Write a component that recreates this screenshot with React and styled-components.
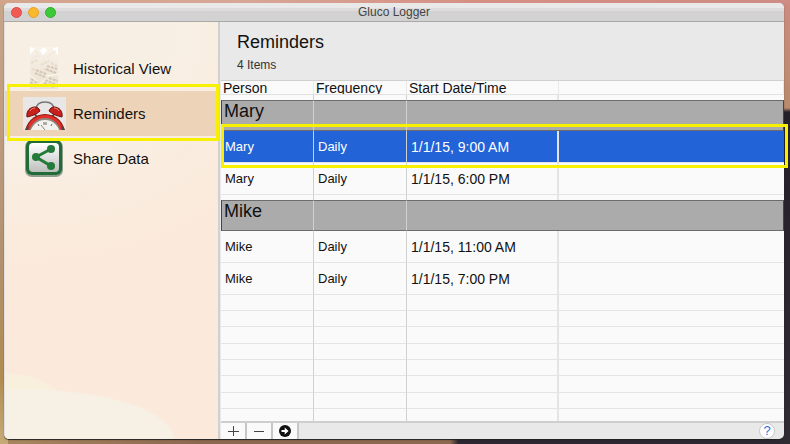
import React from "react";
import styled, { createGlobalStyle } from "styled-components";

const reminderGroups = [
  {
    person: "Mary",
    reminders: [
      { frequency: "Daily", start: "1/1/15, 9:00 AM", selected: true },
      { frequency: "Daily", start: "1/1/15, 6:00 PM" },
    ],
  },
  {
    person: "Mike",
    reminders: [
      { frequency: "Daily", start: "1/1/15, 11:00 AM" },
      { frequency: "Daily", start: "1/1/15, 7:00 PM" },
    ],
  },
];

const emptyRows = [1, 2, 3, 4, 5, 6, 7, 8];

function App() {
  return (
    <Desktop>
      <GlobalStyle />
      <Window>
        <TitleBar>
          <Lights>
            <Light $color="#f25a54" $edge="#dd4a44" aria-label="Close" />
            <Light $color="#f8b92c" $edge="#e0a42a" aria-label="Minimize" />
            <Light $color="#3cca38" $edge="#2fae2c" aria-label="Zoom" />
          </Lights>
          <WindowTitle>Gluco Logger</WindowTitle>
        </TitleBar>
        <Body>
          <Sidebar>
            <NavItem href="#history">
              <HistoryIcon />
              <NavText>Historical View</NavText>
            </NavItem>
            <NavItem href="#reminders" $active>
              <AlarmIcon />
              <NavText>Reminders</NavText>
              <NavHighlight />
            </NavItem>
            <NavItem href="#share">
              <ShareIcon />
              <NavText>Share Data</NavText>
            </NavItem>
          </Sidebar>
          <Content>
            <Header>
              <Title>Reminders</Title>
              <Count>4 Items</Count>
            </Header>
            <ReminderTable />
            <Footer>
              <FooterButton aria-label="Add">
                <svg width="12" height="12" viewBox="0 0 12 12">
                  <path d="M6.500 1v10M1 6.500h11" stroke="#444" />
                </svg>
              </FooterButton>
              <FooterButton aria-label="Remove">
                <svg width="12" height="12" viewBox="0 0 12 12">
                  <path d="M1 6.500h10" stroke="#444" />
                </svg>
              </FooterButton>
              <FooterButton aria-label="Open">
                <svg width="12" height="12" viewBox="0 0 12 12">
                  <circle cx="6" cy="6" r="6" fill="#111" />
                  <path
                    d="M2.500 4.900h3.200V2.600L9.600 6 5.700 9.400V7.100H2.500z"
                    fill="#fff"
                  />
                </svg>
              </FooterButton>
              <HelpButton aria-label="Help">?</HelpButton>
            </Footer>
          </Content>
        </Body>
      </Window>
    </Desktop>
  );
}

function ReminderTable() {
  return (
    <Table>
      <colgroup>
        <Col $width="93px" />
        <Col $width="93px" />
        <Col $width="152px" />
        <Col />
      </colgroup>
      <thead>
        <tr>
          <HeadCell>
            <HeadText>Person</HeadText>
          </HeadCell>
          <HeadCell>
            <HeadText>Frequency</HeadText>
          </HeadCell>
          <HeadCell>
            <HeadText>Start Date/Time</HeadText>
          </HeadCell>
          <HeadCell>
            <HeadText />
          </HeadCell>
        </tr>
      </thead>
      {reminderGroups.map((group) => (
        <tbody key={group.person}>
          <SpacerRow>
            <BaseCell />
            <BaseCell />
            <BaseCell />
            <BaseCell />
          </SpacerRow>
          <tr>
            <GroupCell as="th" scope="rowgroup">
              {group.person}
            </GroupCell>
            <GroupCell />
            <GroupCell />
            <GroupCell />
          </tr>
          {group.reminders.map((reminder) => (
            <Row key={reminder.start} $selected={reminder.selected}>
              <Cell>
                {group.person}
                {reminder.selected && <RowHighlight />}
              </Cell>
              <Cell>{reminder.frequency}</Cell>
              <DateCell>{reminder.start}</DateCell>
              <Cell />
            </Row>
          ))}
        </tbody>
      ))}
      <tbody>
        {emptyRows.map((row) => (
          <tr key={row}>
            <EmptyCell />
            <EmptyCell />
            <EmptyCell />
            <EmptyCell />
          </tr>
        ))}
      </tbody>
    </Table>
  );
}

function HistoryIcon() {
  return (
    <Icon width="43" height="43" viewBox="0 0 43 43">
      <defs>
        <linearGradient id="paper" x1="0" y1="0" x2="0" y2="1">
          <stop offset="0" stopColor="#f9f2e9" />
          <stop offset="1" stopColor="#ebe1d1" />
        </linearGradient>
      </defs>
      <path d="M7 0h28v42H7z" fill="url(#paper)" />
      <path d="M7 0l5 2-5 5zM17 3l5-3 2 4-4 4zM30 1l5-1v8l-4-3z" fill="#fff" />
      <path
        d="M12 3l5 7M24 10l9-6M8 12l8-4M20 13l10 3"
        stroke="#f3eadf"
        strokeWidth="2"
      />
      <path
        d="M8 16l7-3M18 18l8-4M28 16l6 3M9 22l8 3M21 22l10 4"
        stroke="#e8ddcd"
        strokeWidth="2"
        strokeDasharray="3 1"
      />
      <path
        d="M13 23l10 4M12 26l10 4M24 19l10 3M23 22l10 4M8 32l6 4M7 35l6 4M22 33l10 4M21 36l10 4M26 31l9 3"
        stroke="#d3c8b6"
        strokeWidth="2"
        strokeDasharray="3 1"
      />
      <path d="M7 28l7 6M15 38l8-6M24 29l11-2" stroke="#fff9f0" />
    </Icon>
  );
}

function AlarmIcon() {
  return (
    <Icon width="43" height="33" viewBox="0 0 43 33">
      <path d="M0 0h43v33H0z" fill="#e8e7e5" />
      <path
        d="M13 13C13 7 17 5 22 5s9 2 9 8"
        fill="none"
        stroke="#77777a"
        strokeWidth="1.500"
      />
      <path d="M14 20l-3-4M29 20l3-4" stroke="#555" strokeWidth="2" />
      <path
        d="M4 20c-1-6 3-10 8-10 2 0 4 1 5 4-3 3-8 5-13 6z"
        fill="#c9201c"
        stroke="#6e100e"
      />
      <path
        d="M39 20c1-6-3-10-8-10-2 0-4 1-5 4 3 3 8 5 13 6z"
        fill="#c9201c"
        stroke="#6e100e"
      />
      <path d="M7 14c1-2 3-3 5-3M36 14c-1-2-3-3-5-3" fill="none" stroke="#f78a7c" />
      <circle cx="22" cy="37" r="20" fill="#8d1512" />
      <circle cx="22" cy="37" r="19" fill="#df3129" />
      <circle cx="22" cy="37" r="16" fill="#8f8780" />
      <circle cx="22" cy="38" r="15" fill="#f4f2ee" />
      <path d="M21 25v3M23 25v3M15 27l1 2M29 27l-1 2" stroke="#666" />
      <path d="M22 33l-4-5" stroke="#888" />
      <path d="M3 31l3-2-1 4H2zM41 31l-3-2 1 4h3z" fill="#4c4745" />
    </Icon>
  );
}

function ShareIcon() {
  return (
    <Icon width="43" height="39" viewBox="0 0 43 39">
      <defs>
        <linearGradient id="plate" x1="0" y1="0" x2="0" y2="1">
          <stop offset="0" stopColor="#fff" />
          <stop offset="1" stopColor="#bdbfbd" />
        </linearGradient>
      </defs>
      <rect x="2" y="1" width="38" height="37" rx="7" fill="#8f9d8f" />
      <rect x="3" y="1" width="36" height="35" rx="6" fill="#216b36" />
      <rect x="6" y="4" width="30" height="29" rx="4" fill="url(#plate)" />
      <path
        d="M28 10L13 18l15 9"
        fill="none"
        stroke="#237a39"
        strokeWidth="3"
      />
      <circle cx="28" cy="10" r="4" fill="#237a39" />
      <circle cx="13" cy="18" r="4" fill="#237a39" />
      <circle cx="28" cy="27" r="4" fill="#237a39" />
    </Icon>
  );
}

const GlobalStyle = createGlobalStyle`
  * {
    box-sizing: border-box;
  }

  body {
    margin: 0;
    font-family: "Liberation Sans", Arial, sans-serif;
    color: #111;
  }
`;

const Desktop = styled.div`
  display: flex;
  min-height: 100vh;
  padding: 3px 6px 5px 4px;
  background:
    linear-gradient(to right, #d3a48c, #d8a797 30%, #d59084 60%, #cf8c84) top /
      100% 4px no-repeat,
    linear-gradient(#cd8a80, #b98a6c 108px, #24202a 112px, #302a33 100%) right /
      10px 100% no-repeat,
    linear-gradient(#c8a68a, #b3906c 60%, #b18b50 85%, #c6ab78) left / 8px 100%
      no-repeat,
    linear-gradient(to right, #a8875f, #8b6850 25%, #8b6850 57%, #2c2730 58%);
`;

const Window = styled.main`
  display: flex;
  flex: 1;
  flex-direction: column;
  border-radius: 5px;
  background-color: #e9e9e9;
  box-shadow: 0 1px 1px #222;
`;

const TitleBar = styled.header`
  display: grid;
  grid-template-columns: 1fr auto 1fr;
  align-items: center;
  height: 19px;
  padding: 0 7px;
  border-bottom: 1px solid #a9a9a9;
  border-radius: 5px 5px 0 0;
  background: linear-gradient(
    #e9e9e9 5px,
    #dfdcdd 5px,
    #dfdcdd 8px,
    #d2d2d2 8px
  );
`;

const Lights = styled.div`
  display: flex;
  gap: 6px;
`;

const Light = styled.button`
  width: 11px;
  height: 11px;
  padding: 0;
  border: 1px solid ${(props) => props.$edge};
  border-radius: 50%;
  background-color: ${(props) => props.$color};
`;

const WindowTitle = styled.span`
  color: #444;
  font-size: 12px;
  line-height: 18px;
`;

const Body = styled.div`
  display: flex;
  flex: 1;
`;

const Sidebar = styled.nav`
  flex: none;
  width: 216px;
  padding-top: 24px;
  border-right: 2px solid #d0d0d0;
  border-left: 1px solid #e0e0e0;
  border-radius: 0 0 0 5px;
  background:
    radial-gradient(150px 50px at 20px 100%, #f7f0e5 98%, transparent),
    radial-gradient(80px 66px at 0 100%, #f9efdd 98%, transparent),
    radial-gradient(300px 240px at 10% 0, #f8efe4 50%, transparent),
    #fbeadb;
`;

const NavItem = styled.a`
  position: relative;
  display: flex;
  align-items: center;
  gap: 7px;
  height: 45px;
  padding-left: 18px;
  color: #111;
  text-decoration: none;
  background-color: ${(props) => (props.$active ? "#edd3b7" : "transparent")};
`;

const Icon = styled.svg`
  flex: none;
`;

const NavText = styled.span`
  font-size: 15px;
  line-height: 18px;
`;

const Highlight = styled.span`
  position: absolute;
  z-index: 1;
  border: 3px solid #f7f000;
  pointer-events: none;
`;

const NavHighlight = styled(Highlight)`
  inset: -7px -1px -5px 2px;
`;

const RowHighlight = styled(Highlight)`
  inset: -7px -4px -5px 0;
`;

const Content = styled.section`
  display: flex;
  flex: 1;
  flex-direction: column;
  padding-left: 1px;
`;

const Header = styled.div`
  padding: 9px 16px 7px;
`;

const Title = styled.h1`
  margin: 0;
  font-size: 18px;
  font-weight: normal;
  line-height: 22px;
`;

const Count = styled.p`
  margin: 4px 0 0;
  color: #333;
  font-size: 12px;
  line-height: 16px;
`;

const Table = styled.table`
  width: 100%;
  table-layout: fixed;
  border-spacing: 0;
  background-color: #fafafa;
`;

const Col = styled.col`
  width: ${(props) => props.$width || "auto"};
`;

const BaseCell = styled.td`
  padding: 0;
  border-right: 1px solid #d0d0d0;
  font-weight: normal;
  text-align: left;

  &:nth-child(3) {
    border-right: 2px solid #e4e4e4;
  }

  &:last-child {
    border-right: 0;
  }
`;

const HeadCell = styled.th`
  padding: 0;
  border-top: 1px solid #d0d0d0;
  font-size: 14px;
  font-weight: normal;
  text-align: left;
`;

const HeadText = styled.div`
  height: 14px;
  padding-left: 2px;
  border-right: 1px solid #e9e9e9;
  border-bottom: 1px solid #e2e2e2;
  line-height: 15px;
  overflow: hidden;
`;

const SpacerRow = styled.tr`
  height: 5px;
`;

const GroupCell = styled(BaseCell)`
  height: 31px;
  padding-left: 2px;
  border-top: 1px solid #6c6c6c;
  border-bottom: 1px solid #6c6c6c;
  background-color: #ababab;
  font-size: 18px;
  line-height: 20px;
  vertical-align: top;

  &:first-child {
    border-left: 1px solid #444;
  }

  &:nth-child(3) {
    border-right: 0;
  }

  &:last-child {
    border-right: 1px solid #444;
  }
`;

const Cell = styled(BaseCell)`
  height: 32px;
  padding-left: 4px;
  border-bottom: 1px solid #e4e4e4;
  font-size: 13px;
  line-height: 16px;
`;

const DateCell = styled(Cell)`
  font-size: 14px;
`;

const Row = styled.tr`
  position: relative;
  color: ${(props) => (props.$selected ? "#fff" : "#111")};
  background-color: ${(props) => (props.$selected ? "#2263d8" : "transparent")};
`;

const EmptyCell = styled(BaseCell)`
  height: 16px;
  border-bottom: 1px solid #e4e4e4;

  tr:nth-child(3n) > & {
    height: 17px;
  }

  tr:last-child > & {
    height: 12px;
    border-bottom: 0;
  }
`;

const Footer = styled.footer`
  display: flex;
  margin-top: auto;
  border-top: 2px solid #cecece;
`;

const FooterButton = styled.button`
  display: flex;
  align-items: center;
  justify-content: center;
  width: 26px;
  height: 16px;
  padding: 0;
  border: 0;
  border-right: 2px solid #c6c6c6;
  background-color: #fafafa;
`;

const HelpButton = styled.button`
  width: 16px;
  height: 16px;
  margin: 0 9px 0 auto;
  padding: 0;
  border: 1px solid #c8c8c8;
  border-radius: 50%;
  color: #2c6fe0;
  background-color: #fff;
  font-family: inherit;
  font-size: 13px;
  line-height: 14px;
`;

export default App;
